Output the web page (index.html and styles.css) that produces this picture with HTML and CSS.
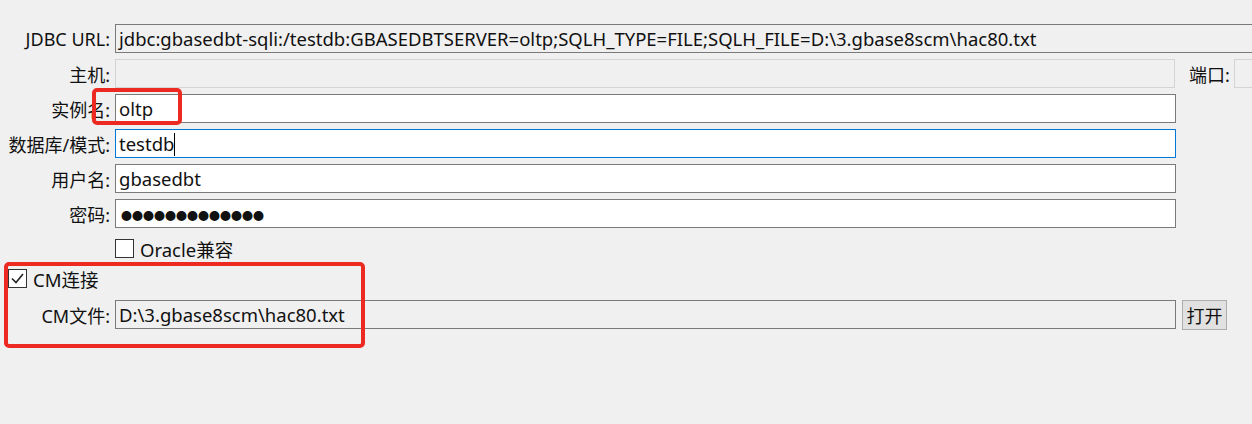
FILE: index.html
```
<!DOCTYPE html>
<html lang="zh-CN">
<head>
  <meta charset="UTF-8">
  <title>连接设置</title>
  <link rel="stylesheet" href="styles.css">
</head>
<body>
  <div class="form">
    <div class="row">
      <label class="label">JDBC URL:</label>
      <div class="field readonly wide">jdbc:gbasedbt-sqli:/testdb:GBASEDBTSERVER=oltp;SQLH_TYPE=FILE;SQLH_FILE=D:\3.gbase8scm\hac80.txt</div>
    </div>
    <div class="row">
      <label class="label">主机:</label>
      <div class="field disabled"></div>
      <label class="port-label">端口:</label>
      <div class="field disabled port"></div>
    </div>
    <div class="row">
      <label class="label">实例名:</label>
      <div class="field">oltp</div>
    </div>
    <div class="row">
      <label class="label">数据库/模式:</label>
      <div class="field focused">testdb<span class="caret"></span></div>
    </div>
    <div class="row">
      <label class="label">用户名:</label>
      <div class="field">gbasedbt</div>
    </div>
    <div class="row">
      <label class="label">密码:</label>
      <div class="field password">●●●●●●●●●●●●●</div>
    </div>
    <div class="check-row indent">
      <span class="box"></span>
      <span>Oracle兼容</span>
    </div>
    <div class="check-row cm">
      <span class="box">
        <svg width="17" height="17" viewBox="0 0 17 17"><polyline points="3,8.5 7,12.5 14,4" fill="none" stroke="#222" stroke-width="1.6"/></svg>
      </span>
      <span>CM连接</span>
    </div>
    <div class="row">
      <label class="label">CM文件:</label>
      <div class="field readonly">D:\3.gbase8scm\hac80.txt</div>
      <button class="open-btn">打开</button>
    </div>
  </div>

  <!-- highlight frames -->
  <div class="mark mark-instance"></div>
  <div class="mark mark-cm"></div>
</body>
</html>
```

FILE: styles.css
```
body {
  margin: 0;
  background: #f0f0f0;
  font-family: "Noto Sans", "Noto Sans CJK SC", sans-serif;
  font-size: 18px;
  color: #111;
  overflow: hidden;
  height: 424px;
  position: relative;
}
.form {
  width: 1320px;
  padding-top: 24px;
}
.row {
  display: flex;
  align-items: center;
  height: 29px;
  margin-bottom: 6px;
}
.label {
  width: 115px;
  flex: none;
  text-align: right;
  padding-right: 5px;
  box-sizing: border-box;
  white-space: nowrap;
}
.field {
  width: 1061px;
  flex: none;
  height: 29px;
  box-sizing: border-box;
  border: 1px solid #7a7a7a;
  background: #fff;
  padding-left: 3px;
  font-size: 18.5px;
  line-height: 27px;
  white-space: nowrap;
  overflow: hidden;
}
.field.wide {
  width: 1200px;
  border-right: none;
}
.field.readonly {
  background: #f0f0f0;
}
.field.disabled {
  background: #f0f0f0;
  border-color: #d4d4d4;
  width: 1060px;
}
.field.focused {
  border-color: #0078d7;
}
.field.password {
  font-size: 11px;
  padding-left: 5px;
  padding-top: 2px;
}
.caret {
  display: inline-block;
  width: 1px;
  height: 23px;
  background: #000;
  vertical-align: middle;
  margin-top: -3px;
}
.port-label {
  margin-left: 14px;
  width: 45px;
  flex: none;
  white-space: nowrap;
}
.field.port {
  width: 40px;
}
.check-row {
  display: flex;
  align-items: center;
  gap: 6px;
  height: 19px;
  font-size: 18.5px;
}
.check-row.indent {
  padding-left: 115px;
  margin-top: 11px;
}
.check-row.cm {
  padding-left: 8px;
  margin-top: 11px;
  margin-bottom: 12px;
}
.box {
  width: 19px;
  height: 19px;
  box-sizing: border-box;
  border: 1px solid #333;
  background: #fff;
  display: flex;
  align-items: center;
  justify-content: center;
}
.open-btn {
  margin-left: 6px;
  width: 45px;
  height: 30px;
  flex: none;
  border: 1px solid #adadad;
  background: #e1e1e1;
  font-family: inherit;
  font-size: 18px;
  color: #111;
  padding: 0;
}
.mark {
  position: absolute;
  border: 4px solid #ec2a22;
  border-radius: 5px;
  box-sizing: border-box;
}
.mark-instance {
  left: 92px;
  top: 88px;
  width: 90px;
  height: 37px;
}
.mark-cm {
  left: 4px;
  top: 262px;
  width: 361px;
  height: 86px;
}
```
